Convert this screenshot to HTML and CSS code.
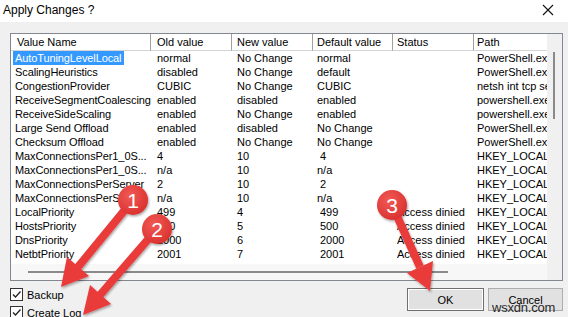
FILE: index.html
```html
<!DOCTYPE html>
<html>
<head>
<meta charset="utf-8">
<link rel="stylesheet" href="styles.css">
</head>
<body>
<div class="titlebar">
  <span class="title">Apply Changes ?</span>
  <svg class="close" width="12" height="12" viewBox="0 0 12 12"><path d="M1 1 L11 11 M11 1 L1 11" stroke="#111" stroke-width="1.1" fill="none"/></svg>
</div>
<div class="dialog">
  <div class="list">
    <div class="list-main">
      <div class="grid header">
        <div class="c c1">Value Name</div>
        <div class="c c2">Old value</div>
        <div class="c c3">New value</div>
        <div class="c c4">Default value</div>
        <div class="c c5">Status</div>
        <div class="c c6">Path</div>
      </div>
      <div class="rows">
        <div class="grid row"><div class="c c1"><span class="sel">AutoTuningLevelLocal</span></div><div class="c c2">normal</div><div class="c c3">No Change</div><div class="c c4">normal</div><div class="c c5"></div><div class="c c6">PowerShell.exe</div></div>
        <div class="grid row"><div class="c c1"><span class="nm">ScalingHeuristics</span></div><div class="c c2">disabled</div><div class="c c3">No Change</div><div class="c c4">default</div><div class="c c5"></div><div class="c c6">PowerShell.exe</div></div>
        <div class="grid row"><div class="c c1"><span class="nm">CongestionProvider</span></div><div class="c c2">CUBIC</div><div class="c c3">No Change</div><div class="c c4">CUBIC</div><div class="c c5"></div><div class="c c6">netsh int tcp set</div></div>
        <div class="grid row"><div class="c c1"><span class="nm">ReceiveSegmentCoalescing</span></div><div class="c c2">enabled</div><div class="c c3">disabled</div><div class="c c4">enabled</div><div class="c c5"></div><div class="c c6">powershell.exe</div></div>
        <div class="grid row"><div class="c c1"><span class="nm">ReceiveSideScaling</span></div><div class="c c2">enabled</div><div class="c c3">No Change</div><div class="c c4">enabled</div><div class="c c5"></div><div class="c c6">powershell.exe</div></div>
        <div class="grid row"><div class="c c1"><span class="nm">Large Send Offload</span></div><div class="c c2">enabled</div><div class="c c3">disabled</div><div class="c c4">No Change</div><div class="c c5"></div><div class="c c6">PowerShell.exe</div></div>
        <div class="grid row"><div class="c c1"><span class="nm">Checksum Offload</span></div><div class="c c2">enabled</div><div class="c c3">No Change</div><div class="c c4">No Change</div><div class="c c5"></div><div class="c c6">PowerShell.exe</div></div>
        <div class="grid row"><div class="c c1"><span class="nm">MaxConnectionsPer1_0S...</span></div><div class="c c2">4</div><div class="c c3">10</div><div class="c c4 num">4</div><div class="c c5"></div><div class="c c6">HKEY_LOCAL_MACHINE</div></div>
        <div class="grid row"><div class="c c1"><span class="nm">MaxConnectionsPer1_0S...</span></div><div class="c c2">n/a</div><div class="c c3">10</div><div class="c c4">n/a</div><div class="c c5"></div><div class="c c6">HKEY_LOCAL_MACHINE</div></div>
        <div class="grid row"><div class="c c1"><span class="nm">MaxConnectionsPerServer</span></div><div class="c c2">2</div><div class="c c3">10</div><div class="c c4 num">2</div><div class="c c5"></div><div class="c c6">HKEY_LOCAL_MACHINE</div></div>
        <div class="grid row"><div class="c c1"><span class="nm">MaxConnectionsPerSe...</span></div><div class="c c2">n/a</div><div class="c c3">10</div><div class="c c4">n/a</div><div class="c c5"></div><div class="c c6">HKEY_LOCAL_MACHINE</div></div>
        <div class="grid row"><div class="c c1"><span class="nm">LocalPriority</span></div><div class="c c2">499</div><div class="c c3">4</div><div class="c c4 num">499</div><div class="c c5">Access dinied</div><div class="c c6">HKEY_LOCAL_MACHINE</div></div>
        <div class="grid row"><div class="c c1"><span class="nm">HostsPriority</span></div><div class="c c2">500</div><div class="c c3">5</div><div class="c c4 num">500</div><div class="c c5">Access dinied</div><div class="c c6">HKEY_LOCAL_MACHINE</div></div>
        <div class="grid row"><div class="c c1"><span class="nm">DnsPriority</span></div><div class="c c2">2000</div><div class="c c3">6</div><div class="c c4 num">2000</div><div class="c c5">Access dinied</div><div class="c c6">HKEY_LOCAL_MACHINE</div></div>
        <div class="grid row"><div class="c c1"><span class="nm">NetbtPriority</span></div><div class="c c2">2001</div><div class="c c3">7</div><div class="c c4 num">2001</div><div class="c c5">Access dinied</div><div class="c c6">HKEY_LOCAL_MACHINE</div></div>
      </div>
      <div class="hscroll"><div class="hthumb"></div></div>
    </div>
    <div class="vscroll"><div class="vthumb"></div></div>
  </div>
  <div class="footer">
    <div class="checks">
      <label class="check"><span class="box"><svg width="11" height="11" viewBox="0 0 11 11"><path d="M2 5.5 L4.5 8 L9.5 2.5" stroke="#222" stroke-width="1.3" fill="none"/></svg></span>Backup</label>
      <label class="check"><span class="box"><svg width="11" height="11" viewBox="0 0 11 11"><path d="M2 5.5 L4.5 8 L9.5 2.5" stroke="#222" stroke-width="1.3" fill="none"/></svg></span>Create Log</label>
    </div>
    <div class="buttons">
      <button class="btn btn-ok">OK</button>
      <button class="btn">Cancel</button>
    </div>
  </div>
</div>
<svg class="annot" width="568" height="317" viewBox="0 0 568 317">
  <defs>
    <radialGradient id="bg" cx="0.4" cy="0.35" r="0.7">
      <stop offset="0" stop-color="#f25a55"/>
      <stop offset="1" stop-color="#d8302e"/>
    </radialGradient>
    <filter id="sh" x="-30%" y="-30%" width="160%" height="160%">
      <feDropShadow dx="1" dy="1.5" stdDeviation="1.2" flood-color="#000" flood-opacity="0.35"/>
    </filter>
  </defs>
  <g filter="url(#sh)" fill="#ea3b3b" stroke="none">
    <line x1="133" y1="200" x2="78" y2="267" stroke="#ea3b3b" stroke-width="8"/>
    <polygon points="61,287 89,276 67,257"/>
    <line x1="157" y1="229" x2="100" y2="295" stroke="#ea3b3b" stroke-width="8"/>
    <polygon points="83,315 111,304 90,285"/>
    <line x1="392" y1="205" x2="420" y2="267" stroke="#ea3b3b" stroke-width="8"/>
    <polygon points="430,291 407,273 433,261"/>
    <circle cx="133" cy="200" r="15" fill="url(#bg)"/>
    <circle cx="157" cy="229" r="15" fill="url(#bg)"/>
    <circle cx="392" cy="205" r="15" fill="url(#bg)"/>
  </g>
  <g class="badge-num">
    <text x="133" y="207.5">1</text>
    <text x="157" y="236.5">2</text>
    <text x="392" y="212.5">3</text>
  </g>
</svg>
<div class="watermark">wsxdn.com</div>
</body>
</html>
```
FILE: styles.css
```css
html, body {
  margin: 0;
  padding: 0;
}
body {
  width: 568px;
  height: 317px;
  overflow: hidden;
  position: relative;
  background: #f0f0f0;
  font-family: "Liberation Sans", Arial, sans-serif;
  font-size: 11px;
  color: #000;
}
.titlebar {
  height: 22px;
  background: #fff;
  display: flex;
  align-items: center;
  justify-content: space-between;
  padding: 0 14px 0 3px;
  box-sizing: border-box;
}
.title {
  font-size: 12px;
  color: #000;
  margin-top: -2px;
}
.close {
  margin-top: -3px;
}
.dialog {
  padding: 11px 5px 0 10px;
}
.list {
  display: flex;
  height: 248px;
  border: 1px solid #828790;
  background: #fff;
  box-sizing: border-box;
}
.list-main {
  flex: 1;
  min-width: 0;
  overflow: hidden;
  display: flex;
  flex-direction: column;
}
.grid {
  display: grid;
  grid-template-columns: 140px 81px 81px 80px 81px 110px;
}
.c {
  white-space: nowrap;
  overflow: hidden;
}
.c2 { padding-left: 6px; }
.c3 { padding-left: 5px; }
.c4 { padding-left: 4px; }
.c5 { padding-left: 4px; }
.c6 { padding-left: 3px; }
.header {
  height: 17px;
  line-height: 16px;
}
.header .c {
  border-right: 1px solid #a0a0a0;
  border-bottom: 1px solid #d4d4d4;
  box-sizing: border-box;
}
.header .c1 { padding-left: 6px; }
.rows {
  flex: 1;
}
.row {
  height: 14px;
  line-height: 14px;
}
.row .c1 {
  padding-left: 2px;
  overflow: visible;
  letter-spacing: -0.1px;
}
.sel, .nm {
  display: inline-block;
  padding: 0 3px 0 2px;
}
.sel {
  background: #3399ff;
  color: #fff;
}
.num {
  padding-left: 7px;
}
.hscroll {
  height: 16px;
  background: #f7f7f7;
  padding-top: 7px;
  box-sizing: border-box;
}
.hthumb {
  margin-left: 17px;
  width: 420px;
  height: 2px;
  background: #8a8a8a;
}
.vscroll {
  width: 15px;
  background: #f0f0f0;
  padding-top: 18px;
  box-sizing: border-box;
}
.vthumb {
  margin-left: 6px;
  width: 2px;
  height: 67px;
  background: #8a8a8a;
}
.footer {
  display: flex;
  justify-content: space-between;
  padding-top: 7px;
}
.checks {
  display: flex;
  flex-direction: column;
  gap: 5px;
}
.check {
  display: flex;
  align-items: center;
  gap: 4px;
  height: 13px;
  font-size: 11px;
}
.box {
  width: 13px;
  height: 13px;
  box-sizing: border-box;
  border: 1px solid #333;
  background: #fff;
  display: flex;
  align-items: center;
  justify-content: center;
}
.buttons {
  display: flex;
  gap: 4px;
}
.btn {
  width: 75px;
  height: 23px;
  margin: 0;
  padding: 0;
  font-family: "Liberation Sans", Arial, sans-serif;
  font-size: 11px;
  color: #000;
  background: #e1e1e1;
  border: 1px solid #adadad;
  box-sizing: border-box;
}
.btn-ok {
  width: 77px;
  border: 1px solid #6f6f6f;
  box-shadow: inset 0 0 0 1px #fff;
}
.annot {
  position: absolute;
  left: 0;
  top: 0;
  pointer-events: none;
}
.badge-num text {
  font-family: "Liberation Sans", Arial, sans-serif;
  font-size: 21px;
  fill: #fff;
  text-anchor: middle;
}
.watermark {
  position: absolute;
  left: 492px;
  top: 300px;
  font-family: "Liberation Sans", Arial, sans-serif;
  font-size: 13px;
  color: #2a2a2a;
  letter-spacing: -0.2px;
}
```
